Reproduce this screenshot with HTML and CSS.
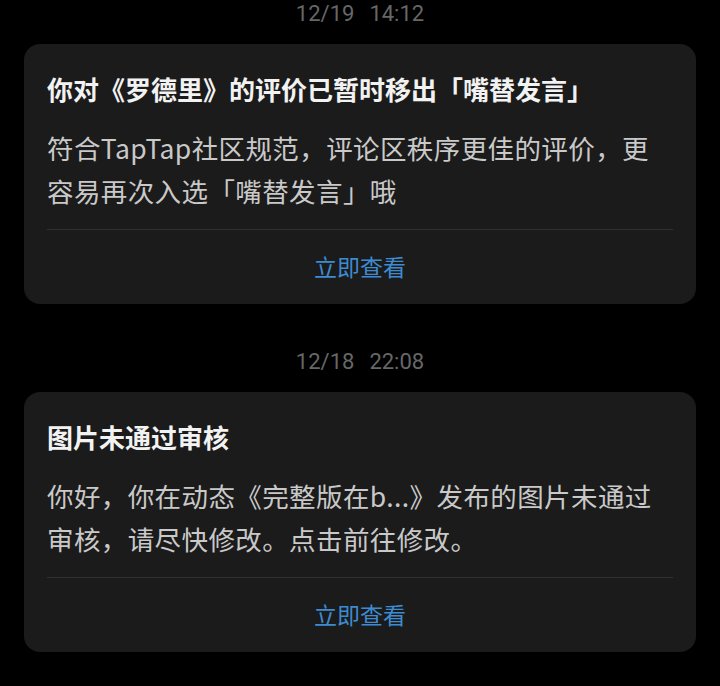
FILE: index.html
```html
<!DOCTYPE html>
<html lang="zh-CN">
<head>
<meta charset="utf-8">
<title>消息</title>
<link rel="stylesheet" href="styles.css">
</head>
<body>
<main class="feed">
  <section class="group">
    <div class="stamp"><span>12/19</span><span>14:12</span></div>
    <article class="card">
      <h2 class="card-title">你对《罗德里》的评价已暂时移出「嘴替发言」</h2>
      <p class="card-body">符合TapTap社区规范，评论区秩序更佳的评价，更容易再次入选「嘴替发言」哦</p>
      <div class="card-action">立即查看</div>
    </article>
  </section>
  <section class="group">
    <div class="stamp"><span>12/18</span><span>22:08</span></div>
    <article class="card">
      <h2 class="card-title">图片未通过审核</h2>
      <p class="card-body">你好，你在动态《完整版在b...》发布的图片未通过审核，请尽快修改。点击前往修改。</p>
      <div class="card-action">立即查看</div>
    </article>
  </section>
</main>
</body>
</html>
```
FILE: styles.css
```css
html, body {
  margin: 0;
  padding: 0;
  background: #000;
}
body {
  font-family: "Noto Sans CJK SC", "Noto Sans", sans-serif;
  height: 686px;
  overflow: hidden;
}
.feed {
  display: flex;
  flex-direction: column;
  gap: 44px;
  padding: 0 24px;
}
.group {
  display: flex;
  flex-direction: column;
}
.stamp {
  display: flex;
  justify-content: center;
  gap: 15px;
  height: 28px;
  line-height: 28px;
  margin-bottom: 16px;
  font-family: Roboto, "Noto Sans", sans-serif;
  font-size: 22px;
  color: #676767;
}
.card {
  background: #1b1b1b;
  border-radius: 16px;
  padding: 27px 23px 0;
  height: 260px;
  box-sizing: border-box;
  display: flex;
  flex-direction: column;
}
.card-title {
  margin: 0;
  font-size: 26px;
  line-height: 36px;
  font-weight: 700;
  color: #f2f2f2;
}
.card-body {
  margin: 19px 0 0;
  padding: 0 8px 17px 0;
  font-size: 26.5px;
  line-height: 43px;
  letter-spacing: 0.4px;
  color: #c9c9c9;
  height: 86px;
  border-bottom: 1px solid #303030;
}
.card-action {
  flex: 1;
  display: flex;
  align-items: center;
  justify-content: center;
  padding-bottom: 3px;
  font-size: 23px;
  color: #3d8bd1;
}
```
